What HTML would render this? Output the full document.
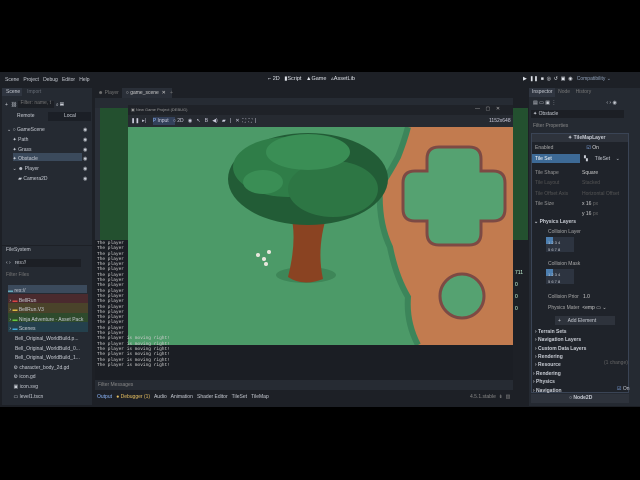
<!DOCTYPE html>
<html><head><meta charset="utf-8"><style>
*{margin:0;padding:0;box-sizing:border-box}
body{width:640px;height:480px;background:#000;position:relative;overflow:hidden;font-family:"Liberation Sans",sans-serif;color:#c8ccd4;font-size:5px}
.a{position:absolute}
.t{position:absolute;white-space:nowrap;line-height:1}
</style></head><body>
<div class="a" style="left:0;top:72px;width:640px;height:335px;background:#1d2026"></div>
<div class="t" style="left:5px;top:78px">Scene&nbsp;&nbsp; Project&nbsp;&nbsp; Debug&nbsp;&nbsp; Editor&nbsp;&nbsp; Help</div>
<div class="t" style="left:268px;top:77px;font-size:5.5px;color:#dfe3ea">⌐ 2D&nbsp;&nbsp; ▮Script&nbsp;&nbsp; ▲Game&nbsp;&nbsp; ▵AssetLib</div>
<div class="t" style="left:523px;top:77px;color:#dfe3ea">▶&nbsp; ❚❚&nbsp; ■&nbsp; ◎&nbsp; ↺&nbsp; ▣&nbsp; ◉&nbsp;&nbsp; <span style="color:#8fa0b8">Compatibility ⌄</span></div>
<div class="a" style="left:2px;top:88px;width:90px;height:157px;background:#252a32"></div>
<div class="a" style="left:2px;top:88px;width:20px;height:8px;background:#2f3540"></div>
<div class="t" style="left:6px;top:90px">Scene&nbsp;&nbsp;&nbsp;&nbsp; <span style="color:#666c76">Import</span></div>
<div class="t" style="left:5px;top:101px">+&nbsp; ⛓ <span style="display:inline-block;width:36px;height:7px;background:#1c1f25;color:#777;vertical-align:middle;padding-left:2px">Filter: name, t</span> ⌕ ▤</div>
<div class="a" style="left:48px;top:112px;width:43px;height:9px;background:#1b1f26"></div>
<div class="t" style="left:17px;top:114px">Remote</div><div class="t" style="left:64px;top:114px">Local</div>
<div class="a" style="left:13px;top:153px;width:69px;height:8px;background:#3b4a5c"></div>
<div class="t" style="left:7px;top:126px;line-height:9.8px">⌄ ○ GameScene<br>&nbsp;&nbsp;&nbsp;&nbsp;✦ Path<br>&nbsp;&nbsp;&nbsp;&nbsp;✦ Grass<br>&nbsp;&nbsp;&nbsp;&nbsp;✦ Obstacle<br>&nbsp;&nbsp;&nbsp;&nbsp;⌄ ☻ Player<br>&nbsp;&nbsp;&nbsp;&nbsp;&nbsp;&nbsp;&nbsp;&nbsp;▰ Camera2D</div>
<div class="t" style="left:83px;top:126px;line-height:9.8px">◉<br>◉<br>◉<br>◉<br>◉<br>◉</div>
<div class="a" style="left:2px;top:246px;width:90px;height:159px;background:#252a32"></div>
<div class="t" style="left:6px;top:248px">FileSystem</div>
<div class="a" style="left:19px;top:259px;width:62px;height:8px;background:#1c1f25"></div>
<div class="t" style="left:6px;top:261px">‹ ›&nbsp;&nbsp; res://</div>
<div class="t" style="left:6px;top:273px;color:#777">Filter Files</div>
<div class="a" style="left:8px;top:285px;width:79px;height:8px;background:#3b4a5c"></div>
<div class="a" style="left:8px;top:294px;width:80px;height:9px;background:#4a2a2e"></div>
<div class="a" style="left:8px;top:303px;width:80px;height:10px;background:#4a432a"></div>
<div class="a" style="left:8px;top:313px;width:80px;height:9px;background:#2e4a2c"></div>
<div class="a" style="left:8px;top:322px;width:80px;height:10px;background:#24404c"></div>
<div class="t" style="left:8px;top:287px;line-height:9.6px"><span style="color:#6ab">▬</span> res://<br>&nbsp;› <span style="color:#d44">▬</span> BellRun<br>&nbsp;› <span style="color:#db4">▬</span> BellRun.V3<br>&nbsp;› <span style="color:#6c4">▬</span> Ninja Adventure - Asset Pack<br>&nbsp;› <span style="color:#4ad">▬</span> Scenes<br>&nbsp;&nbsp;&nbsp;&nbsp;&nbsp;Bell_Original_WorldBuild.p...<br>&nbsp;&nbsp;&nbsp;&nbsp;&nbsp;Bell_Original_WorldBuild_0...<br>&nbsp;&nbsp;&nbsp;&nbsp;&nbsp;Bell_Original_WorldBuild_1...<br>&nbsp;&nbsp;&nbsp;&nbsp;⚙ character_body_2d.gd<br>&nbsp;&nbsp;&nbsp;&nbsp;⚙ icon.gd<br>&nbsp;&nbsp;&nbsp;&nbsp;▣ icon.svg<br>&nbsp;&nbsp;&nbsp;&nbsp;▭ level1.tscn</div>
<div class="a" style="left:95px;top:88px;width:418px;height:10px;background:#1d2026"></div>
<div class="a" style="left:122px;top:88px;width:50px;height:10px;background:#2a2f38"></div>
<div class="t" style="left:98px;top:91px;color:#777">☻ Player&nbsp;&nbsp;&nbsp;&nbsp; <span style="color:#ccc">○ game_scene&nbsp; ✕</span>&nbsp;&nbsp; +</div>
<div class="a" style="left:95px;top:98px;width:418px;height:10px;background:#262b33"></div>
<div class="a" style="left:95px;top:108px;width:33px;height:132px;background:#23502f"></div>
<div class="a" style="left:95px;top:108px;width:5px;height:132px;background:#2a2f38"></div>
<div class="a" style="left:128px;top:105px;width:385px;height:10px;background:#1f2228"></div>
<div class="t" style="left:131px;top:108px;font-size:4px;color:#999">▣ New Game Project (DEBUG)</div>
<div class="t" style="left:475px;top:107px;color:#aaa">—&nbsp;&nbsp;&nbsp; ▢&nbsp;&nbsp;&nbsp; ✕</div>
<div class="a" style="left:128px;top:115px;width:385px;height:12px;background:#262a31"></div>
<div class="a" style="left:153px;top:117px;width:22px;height:8px;background:#33405a"></div>
<div class="t" style="left:131px;top:119px;color:#ccd">❚❚&nbsp; ▸|&nbsp;&nbsp;&nbsp;&nbsp; <span style="color:#8ab4f8">P</span> Input&nbsp;&nbsp; ○ 2D&nbsp;&nbsp; ◉&nbsp;&nbsp; ↖&nbsp;&nbsp; B&nbsp;&nbsp; ◀)&nbsp;&nbsp; ▰&nbsp;&nbsp; |&nbsp;&nbsp; ✕&nbsp; ⛶&nbsp; ⛶&nbsp; |</div>
<div class="t" style="left:489px;top:119px;color:#ccd">1152x648</div>
<svg class="a" style="left:128px;top:127px" width="385" height="218" viewBox="0 0 385 218">
<rect width="385" height="218" fill="#4c9a68"/>
<path d="M280 0 L385 0 L385 218 L290 218 Q278 195 280 170 Q268 150 262 120 Q250 95 252 60 Q262 45 270 30 Q276 15 280 0Z" fill="#c27b4f"/>
<path d="M280 0 Q276 15 270 30 Q262 45 252 60 Q250 95 262 120 Q268 150 280 170 Q278 195 290 218" fill="none" stroke="#3c855a" stroke-width="6"/>
<path d="M311 20 h30 q12 0 12 12 v12 h12 q12 0 12 12 v26 q0 12 -12 12 h-12 v12 q0 12 -12 12 h-30 q-12 0 -12 -12 v-12 h-12 q-12 0 -12 -12 v-26 q0 -12 12 -12 h12 v-12 q0 -12 12 -12z" fill="#55a271" stroke="#7d4a44" stroke-width="3"/>
<ellipse cx="334" cy="169" rx="22" ry="22" fill="#55a271" stroke="#7d4a44" stroke-width="3"/>
<ellipse cx="178" cy="148" rx="30" ry="8" fill="#3e8658"/>
<path d="M162 85 Q170 110 160 150 Q175 160 195 152 Q188 120 200 85Z" fill="#8a4322"/>
<ellipse cx="180" cy="52" rx="80" ry="46" fill="#225c36"/>
<ellipse cx="160" cy="40" rx="55" ry="30" fill="#2f7d48"/>
<ellipse cx="205" cy="62" rx="45" ry="28" fill="#2d7644"/>
<ellipse cx="180" cy="25" rx="42" ry="18" fill="#3a8e55"/>
<ellipse cx="135" cy="55" rx="20" ry="12" fill="#3a8e55"/>
<g fill="#e8e6dc"><circle cx="130" cy="128" r="2"/><circle cx="136" cy="132" r="2"/><circle cx="141" cy="125" r="2"/><circle cx="138" cy="137" r="2"/></g>
</svg>
<div class="a" style="left:513px;top:108px;width:15px;height:232px;background:#23502f"></div>
<div class="a" style="left:513px;top:240px;width:15px;height:100px;background:#1d2026"></div>
<div class="t" style="left:515px;top:267px;line-height:12px;color:#cfd">711<br>0<br>0<br>0</div>
<div class="a" style="left:95px;top:240px;width:33px;height:105px;background:#1b1e24"></div>
<div class="a" style="left:95px;top:345px;width:418px;height:35px;background:#1b1e24"></div>
<div class="t" style="left:97px;top:241px;line-height:5.3px;font-family:'Liberation Mono',monospace;font-size:4.5px;color:#ccc">The player<br>The player<br>The player<br>The player<br>The player<br>The player<br>The player<br>The player<br>The player<br>The player<br>The player<br>The player<br>The player<br>The player<br>The player<br>The player<br>The player<br>The player<br>The player is moving right!<br>The player is moving right!<br>The player is moving right!<br>The player is moving right!<br>The player is moving right!<br>The player is moving right!</div>
<div class="a" style="left:95px;top:380px;width:418px;height:10px;background:#262b33"></div>
<div class="t" style="left:98px;top:383px;color:#888">Filter Messages</div>
<div class="t" style="left:97px;top:395px"><span style="color:#8ab4f8">Output</span>&nbsp;&nbsp; <span style="color:#e8c060">● Debugger (1)</span>&nbsp;&nbsp; Audio&nbsp;&nbsp; Animation&nbsp;&nbsp; Shader Editor&nbsp;&nbsp; TileSet&nbsp;&nbsp; TileMap</div>
<div class="t" style="left:470px;top:395px;color:#888">4.5.1.stable&nbsp; ⇟&nbsp; ▥</div>
<div class="a" style="left:529px;top:88px;width:111px;height:318px;background:#252a32"></div>
<div class="a" style="left:529px;top:88px;width:26px;height:9px;background:#2f3540"></div>
<div class="t" style="left:532px;top:90px">Inspector&nbsp;&nbsp;&nbsp; <span style="color:#777">Node&nbsp;&nbsp;&nbsp; History</span></div>
<div class="t" style="left:533px;top:101px">▤ ▭ ▣ ⋮<span style="margin-left:50px">‹ › ◉</span></div>
<div class="a" style="left:531px;top:110px;width:93px;height:8px;background:#1c1f25"></div>
<div class="t" style="left:533px;top:112px">✦ Obstacle</div>
<div class="t" style="left:533px;top:124px;color:#888">Filter Properties</div>
<div class="a" style="left:531px;top:133px;width:98px;height:260px;background:#1f232a;border:1px solid #3a4455"></div>
<div class="a" style="left:532px;top:134px;width:96px;height:8px;background:#2e333c"></div>
<div class="t" style="left:568px;top:136px;font-weight:bold">✦ TileMapLayer</div>
<div class="t" style="left:535px;top:146px;color:#aaa">Enabled<span style="margin-left:33px;color:#ddd"><span style="color:#8ab4f8">☑</span> On</span></div>
<div class="a" style="left:532px;top:154px;width:48px;height:9px;background:#3d6a96"></div>
<div class="t" style="left:535px;top:157px;color:#fff">Tile Set</div>
<div class="t" style="left:584px;top:157px">▚&nbsp;&nbsp;&nbsp;&nbsp; TileSet&nbsp;&nbsp;&nbsp; ⌄</div>
<div class="t" style="left:535px;top:168px;line-height:10.3px;color:#999">Tile Shape<br><span style="color:#555">Tile Layout<br>Tile Offset Axis</span><br>Tile Size</div>
<div class="t" style="left:582px;top:168px;line-height:10.3px;color:#ccc">Square<br><span style="color:#555">Stacked<br>Horizontal Offset</span><br>x 16 <span style="color:#666">px</span><br>y 16 <span style="color:#666">px</span></div>
<div class="t" style="left:534px;top:220px;font-weight:bold">⌄ Physics Layers</div>
<div class="t" style="left:548px;top:230px;color:#aaa">Collision Layer</div>
<div class="a" style="left:546px;top:237px;width:28px;height:15px;background:#2d3440"></div>
<div class="a" style="left:546px;top:237px;width:7px;height:7px;background:#4d7fb0"></div>
<div class="t" style="left:548px;top:239px;line-height:7px;font-size:4px">1 2 3 4<br>5 6 7 8</div>
<div class="t" style="left:548px;top:262px;color:#aaa">Collision Mask</div>
<div class="a" style="left:546px;top:269px;width:28px;height:15px;background:#2d3440"></div>
<div class="a" style="left:546px;top:269px;width:7px;height:7px;background:#4d7fb0"></div>
<div class="t" style="left:548px;top:271px;line-height:7px;font-size:4px">1 2 3 4<br>5 6 7 8</div>
<div class="t" style="left:548px;top:295px;color:#aaa">Collision Prior&nbsp;&nbsp; <span style="color:#ccc">1.0</span></div>
<div class="t" style="left:548px;top:306px;color:#aaa">Physics Mater&nbsp; <span style="color:#ccc">&lt;emp ▭ ⌄</span></div>
<div class="a" style="left:555px;top:316px;width:60px;height:9px;background:#2e333c"></div>
<div class="t" style="left:558px;top:319px">+&nbsp;&nbsp;&nbsp;&nbsp; Add Element</div>
<div class="t" style="left:535px;top:328px;line-height:8.3px;font-weight:bold">› Terrain Sets<br>› Navigation Layers<br>› Custom Data Layers<br>› Rendering<br>› Resource</div>
<div class="t" style="left:604px;top:361px;color:#666">(1 change)</div>
<div class="t" style="left:533px;top:370px;line-height:8.4px;font-weight:bold">› Rendering<br>› Physics<br>› Navigation</div>
<div class="t" style="left:617px;top:387px"><span style="color:#8ab4f8">☑</span> On</div>
<div class="a" style="left:531px;top:394px;width:98px;height:9px;background:#2e333c"></div>
<div class="t" style="left:569px;top:396px;font-weight:bold">○ Node2D</div>
</body></html>
